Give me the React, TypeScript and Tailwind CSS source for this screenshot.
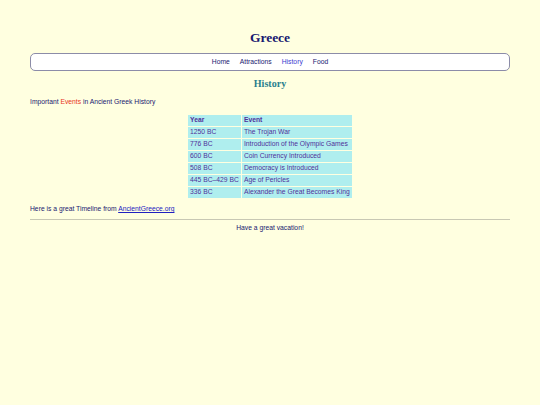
const rows: [string, string][] = [
  ["1250 BC", "The Trojan War"],
  ["776 BC", "Introduction of the Olympic Games"],
  ["600 BC", "Coin Currency Introduced"],
  ["508 BC", "Democracy is Introduced"],
  ["445 BC–429 BC", "Age of Pericles"],
  ["336 BC", "Alexander the Great Becomes King"],
];

const links = ["Home", "Attractions", "History", "Food"];

export default function App() {
  return (
    <div className="min-h-[405px] bg-[#ffffe0] px-[30px] pt-[30px] font-['Liberation_Sans',Arial,sans-serif] text-[6.75px] text-[#191970]">
      <h1 className="text-center font-['Liberation_Serif','Times_New_Roman',serif] text-[13.5px] font-bold leading-[16px] text-[#191970]">
        Greece
      </h1>
      <nav className="mt-[7px] flex h-[18px] items-center justify-center gap-[10px] rounded-[5px] border border-[#8c8ca8] bg-white">
        {links.map((l) => (
          <a key={l} className={l === "History" ? "text-[#3b3bd0]" : "text-[#191970]"}>
            {l}
          </a>
        ))}
      </nav>
      <h2 className="mt-[7px] text-center font-['Liberation_Serif','Times_New_Roman',serif] text-[10.1px] font-bold leading-[12px] text-[#2a7f8e]">
        History
      </h2>
      <p className="mt-[8px] leading-[8px]">
        Important <span className="text-[#e8341c]">Events</span> in Ancient Greek History
      </p>
      <table className="mx-auto mt-[8px] border-separate border-spacing-[1px] text-left text-[#50309a]">
        <thead>
          <tr>
            <th className="h-[11px] w-[52px] bg-[#afeeee] px-[2px] font-bold">Year</th>
            <th className="h-[11px] w-[110px] bg-[#afeeee] px-[2px] font-bold">Event</th>
          </tr>
        </thead>
        <tbody>
          {rows.map(([y, e]) => (
            <tr key={y}>
              <td className="h-[11px] whitespace-nowrap bg-[#afeeee] px-[2px]">{y}</td>
              <td className="h-[11px] whitespace-nowrap bg-[#afeeee] px-[2px]">{e}</td>
            </tr>
          ))}
        </tbody>
      </table>
      <p className="mt-[6px] leading-[8px]">
        Here is a great Timeline from{" "}
        <a className="text-[#2020c0] underline">AncientGreece.org</a>
      </p>
      <hr className="mt-[6px] border-t border-[#c8c8b4]" />
      <p className="mt-[4px] text-center leading-[8px]">Have a great vacation!</p>
    </div>
  );
}
